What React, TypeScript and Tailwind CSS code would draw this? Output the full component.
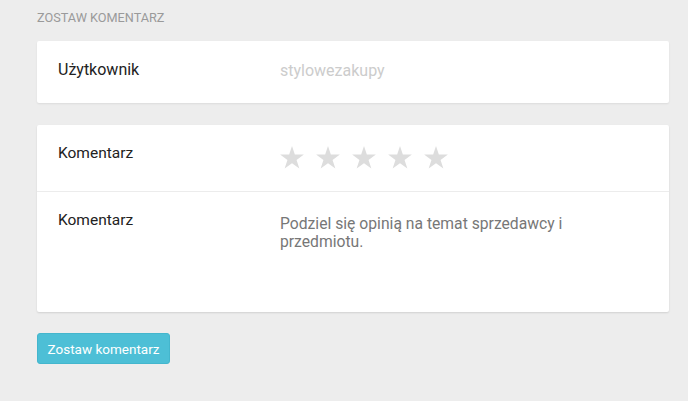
import React from "react";

function Star() {
  return (
    <svg width="24" height="23" viewBox="0 0 24 23" className="block">
      <path d="M12 0 L14.83 8.6 L23.9 8.6 L16.56 13.9 L19.36 22.5 L12 17.2 L4.64 22.5 L7.44 13.9 L0.1 8.6 L9.17 8.6 Z" fill="#dddddd" />
    </svg>
  );
}

export default function App() {
  return (
    <div className="min-h-[401px] w-full bg-[#ededed] px-[37px] pt-[10px] pb-[36px]" style={{ fontFamily: "Roboto, 'Liberation Sans', sans-serif" }}>
      <div className="text-[12.7px] uppercase text-[#9a9a9a] leading-[16px]">Zostaw komentarz</div>
      <div className="mt-[15px] w-[632px] bg-white rounded-[2px] shadow-[0_1px_2px_rgba(0,0,0,0.08)] flex px-[21px] h-[62px] pt-[19px]">
        <div className="w-[222px] text-[16px] leading-[20px] text-[#222]">Użytkownik</div>
        <div className="text-[16px] leading-[20px] pt-[1px] text-[#cccccc]">stylowezakupy</div>
      </div>
      <div className="mt-[22px] w-[632px] bg-white rounded-[2px] shadow-[0_1px_2px_rgba(0,0,0,0.12)]">
        <div className="flex px-[21px] h-[67px] pt-[18px] border-b border-[#ececec]">
          <div className="w-[222px] text-[15.5px] leading-[20px] text-[#222]">Komentarz</div>
          <div className="flex gap-[12px] pt-[3px]">
            <Star />
            <Star />
            <Star />
            <Star />
            <Star />
          </div>
        </div>
        <div className="flex px-[21px] h-[120px] pt-[18px]">
          <div className="w-[222px] text-[15.5px] leading-[20px] text-[#222]">Komentarz</div>
          <div className="w-[310px] text-[15.7px] leading-[18px] pt-[5px] text-[#777]">
            Podziel się opinią na temat sprzedawcy i przedmiotu.
          </div>
        </div>
      </div>
      <button className="mt-[21px] h-[31px] w-[133px] rounded-[3px] bg-[#4dbfd6] border border-[#44b6cd] text-white text-[13.5px] leading-[20px]">
        Zostaw komentarz
      </button>
    </div>
  );
}
